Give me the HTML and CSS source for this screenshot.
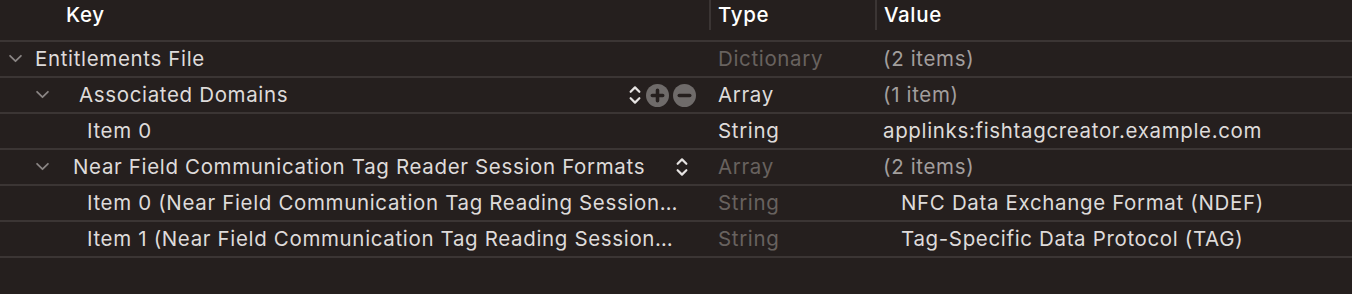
FILE: index.html
```html
<!DOCTYPE html>
<html lang="en">
<head>
    <meta charset="UTF-8">
    <title>Entitlements</title>
    <link rel="stylesheet" href="styles.css">
</head>
<body>
    <div class="plist">
        <div class="plist-header">
            <div class="col key-col">Key</div>
            <div class="col type-col">Type</div>
            <div class="col value-col">Value</div>
        </div>

        <div class="row">
            <div class="key level-0">
                <svg class="chevron" viewBox="0 0 12 8"><path d="M1 1.5 6 6.5 11 1.5"></path></svg>
                <span>Entitlements File</span>
            </div>
            <div class="type dim">Dictionary</div>
            <div class="value muted">(2 items)</div>
        </div>

        <div class="row">
            <div class="key level-1">
                <svg class="chevron" viewBox="0 0 12 8"><path d="M1 1.5 6 6.5 11 1.5"></path></svg>
                <span class="key-text spaced">Associated Domains</span>
                <div class="controls">
                    <svg class="stepper" viewBox="0 0 12 22"><path d="M2 8 6 4 10 8M2 14 6 18 10 14"></path></svg>
                    <svg class="round-btn" viewBox="0 0 22 22"><circle cx="11" cy="11" r="11"></circle><path d="M11 6v10M6 11h10"></path></svg>
                    <svg class="round-btn" viewBox="0 0 22 22"><circle cx="11" cy="11" r="11"></circle><path d="M6 11h10"></path></svg>
                </div>
            </div>
            <div class="type">Array</div>
            <div class="value muted">(1 item)</div>
        </div>

        <div class="row">
            <div class="key level-2"><span>Item 0</span></div>
            <div class="type">String</div>
            <div class="value">applinks:fishtagcreator.example.com</div>
        </div>

        <div class="row">
            <div class="key level-1">
                <svg class="chevron" viewBox="0 0 12 8"><path d="M1 1.5 6 6.5 11 1.5"></path></svg>
                <span class="key-text">Near Field Communication Tag Reader Session Formats</span>
                <div class="controls tight">
                    <svg class="stepper" viewBox="0 0 12 22"><path d="M2 8 6 4 10 8M2 14 6 18 10 14"></path></svg>
                </div>
            </div>
            <div class="type dim">Array</div>
            <div class="value muted">(2 items)</div>
        </div>

        <div class="row">
            <div class="key level-2" title="Item 0 (Near Field Communication Tag Reading Session Format)"><span>Item 0 (Near Field Communication Tag Reading Session…</span></div>
            <div class="type dim">String</div>
            <div class="value indent">NFC Data Exchange Format (NDEF)</div>
        </div>

        <div class="row">
            <div class="key level-2" title="Item 1 (Near Field Communication Tag Reading Session Format)"><span>Item 1 (Near Field Communication Tag Reading Session…</span></div>
            <div class="type dim">String</div>
            <div class="value indent">Tag-Specific Data Protocol (TAG)</div>
        </div>
    </div>
</body>
</html>
```

FILE: styles.css
```css
:root {
    --bg: #251f1e;
    --line: #3b3534;
    --text: #dedbda;
    --text-head: #ffffff;
    --text-muted: #a29e9d;
    --text-dim: #68625f;
    --icon: #6f6b6a;
}

body {
    margin: 0;
    background-color: var(--bg);
    font-family: Inter, "Liberation Sans", sans-serif;
    font-size: 20.5px;
    letter-spacing: 0.65px;
    color: var(--text);
}

.plist { width: 1352px; }

.plist-header {
    display: grid;
    grid-template-columns: 709px 166px 1fr;
    height: 40px;
    border-bottom: 2px solid var(--line);
}

.plist-header .col {
    color: var(--text-head);
    font-weight: 500;
    line-height: 30px;
    height: 30px;
}
.plist-header .key-col { padding-left: 66px; }
.plist-header .type-col,
.plist-header .value-col { border-left: 2px solid var(--line); padding-left: 7px; }

.row {
    display: grid;
    grid-template-columns: 709px 166px 1fr;
    height: 34px;
    padding-bottom: 2px;
    box-sizing: border-box;
    height: 36px;
    border-bottom: 2px solid var(--line);
    align-items: center;
}

.key {
    display: flex;
    align-items: center;
    height: 100%;
    white-space: nowrap;
    overflow: hidden;
}
.key.level-0 { padding-left: 9px; }
.key.level-1 { padding-left: 36px; }
.key.level-2 { padding-left: 87px; }

.chevron {
    width: 13px;
    height: 9px;
    fill: none;
    stroke: #8a8584;
    stroke-width: 1.6;
    stroke-linecap: round;
    stroke-linejoin: round;
    margin-right: 13px;
    flex-shrink: 0;
}
.level-1 .chevron { margin-right: 24px; }
.level-1 .key-text.spaced { margin-left: 6px; }

.controls {
    margin-left: auto;
    margin-right: 13px;
    display: flex;
    align-items: center;
    gap: 4px;
    padding-top: 2px;
}
.controls.tight { margin-left: 30px; margin-right: 0; }

.stepper {
    width: 14px;
    height: 24px;
    fill: none;
    stroke: #e6e3e2;
    stroke-width: 2;
    stroke-linecap: round;
    stroke-linejoin: round;
}

.round-btn { width: 23px; height: 23px; }
.round-btn circle { fill: var(--icon); }
.round-btn path { stroke: var(--bg); stroke-width: 3.4; stroke-linecap: round; }

.type { padding-left: 9px; }
.value { padding-left: 8px; white-space: nowrap; }
.value.indent { padding-left: 26px; }

.dim { color: var(--text-dim); }
.muted { color: var(--text-muted); }
```
